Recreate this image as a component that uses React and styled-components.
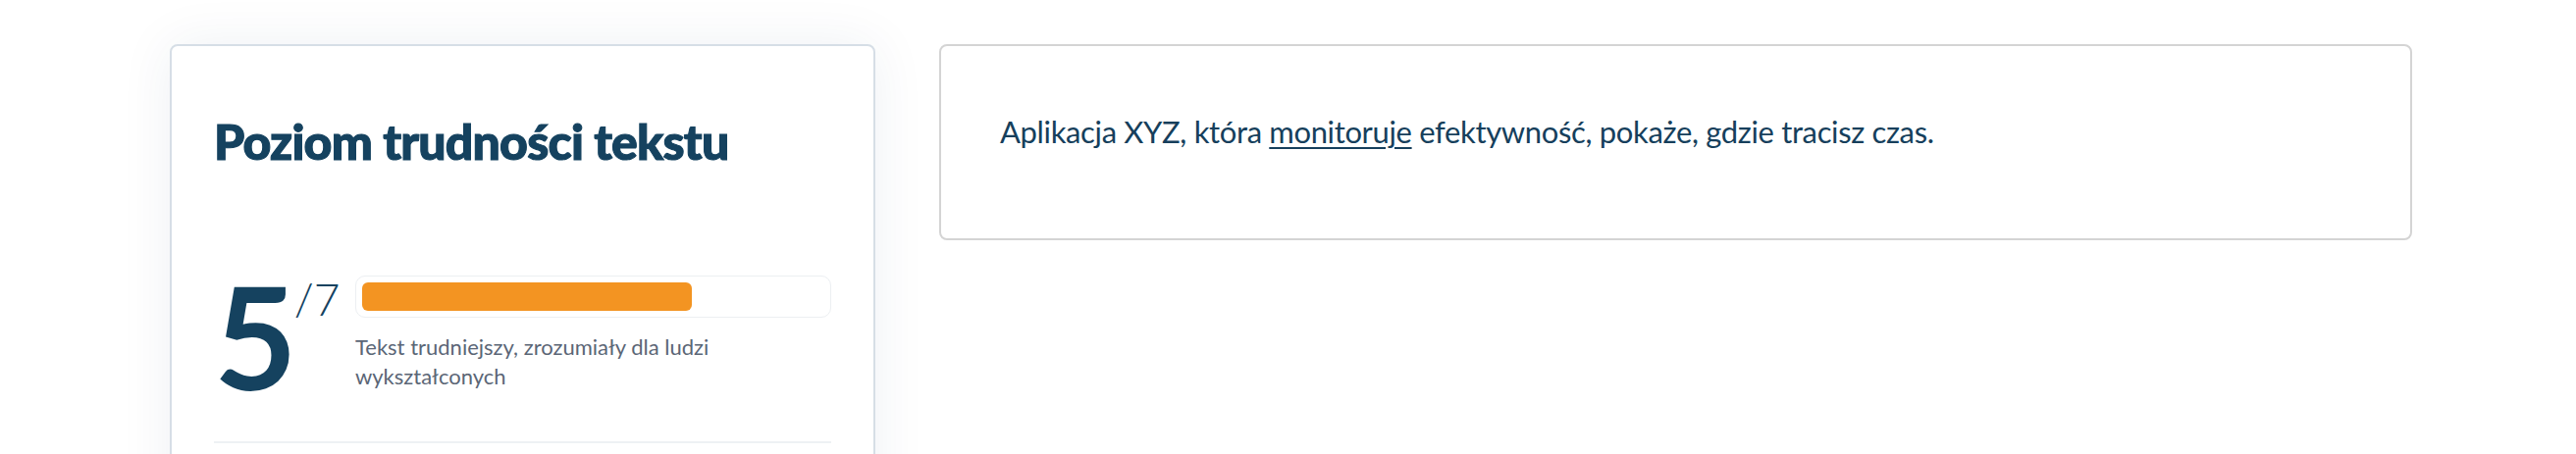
import React from 'react';
import styled, { createGlobalStyle } from 'styled-components';

const GlobalStyle = createGlobalStyle`
  body {
    margin: 0;
    background: #ffffff;
    overflow: hidden;
    font-family: 'Lato', 'Noto Sans', sans-serif;
  }
`;

const Layout = styled.main`
  display: flex;
  align-items: flex-start;
  gap: 65px;
  padding: 45px 167px 0 173px;
`;

const ScoreCard = styled.section`
  width: 719px;
  height: 640px;
  flex-shrink: 0;
  box-sizing: border-box;
  padding: 67px 43px 0;
  background: #ffffff;
  border: 2px solid #d6dee6;
  border-radius: 8px;
  box-shadow: 0 0 55px rgba(30, 60, 95, 0.07);
`;

const CardTitle = styled.h2`
  margin: 0;
  font-family: 'Lato', sans-serif;
  font-weight: 900;
  font-size: 50px;
  line-height: 60px;
  letter-spacing: -0.8px;
  color: #15425f;
  -webkit-text-stroke: 1.1px #15425f;
`;

const ScoreRow = styled.div`
  display: flex;
  margin-top: 95px;
`;

const Score = styled.div`
  display: flex;
  align-items: flex-start;
  width: 144px;
  flex-shrink: 0;
  color: #15425f;
`;

const Digit = styled.span`
  font-weight: 700;
  font-size: 146px;
  line-height: 1;
`;

const OutOf = styled.span`
  margin: 13px 0 0 -3px;
  font-weight: 300;
  font-size: 46px;
  line-height: 1;
`;

const BarColumn = styled.div`
  flex: 1;
  margin-top: 12px;
`;

const Track = styled.div`
  height: 43px;
  box-sizing: border-box;
  padding: 6px;
  border: 1px solid #eceff2;
  border-radius: 10px;
`;

const Fill = styled.div`
  height: 100%;
  background: #f39422;
  border-radius: 6px;
`;

const Description = styled.p`
  margin: 15px 0 0;
  max-width: 420px;
  font-size: 22px;
  line-height: 30px;
  letter-spacing: 0;
  color: #5b6676;
`;

const Divider = styled.hr`
  margin: 35px 0 0;
  border: none;
  border-top: 2px solid #eef1f4;
`;

const ExampleCard = styled.section`
  width: 1501px;
  height: 200px;
  flex-shrink: 0;
  box-sizing: border-box;
  padding: 69px 60px 0;
  border: 2px solid #d4d4d4;
  border-radius: 8px;
  background: #ffffff;
`;

const ExampleText = styled.p`
  margin: 0;
  font-size: 31px;
  line-height: 1.2;
  letter-spacing: -0.35px;
  color: #163f5c;
`;

const Marked = styled.span`
  text-decoration: underline;
  text-decoration-thickness: 2px;
  text-underline-offset: 4px;
`;

const level = 5;
const maxLevel = 7;

export default function App() {
  return (
    <>
      <GlobalStyle />
      <Layout>
        <ScoreCard>
          <CardTitle>Poziom trudności tekstu</CardTitle>
          <ScoreRow>
            <Score>
              <Digit>{level}</Digit>
              <OutOf>/{maxLevel}</OutOf>
            </Score>
            <BarColumn>
              <Track>
                <Fill style={{ width: `${(level / maxLevel) * 100}%` }} />
              </Track>
              <Description>
                Tekst trudniejszy, zrozumiały dla ludzi wykształconych
              </Description>
            </BarColumn>
          </ScoreRow>
          <Divider />
        </ScoreCard>
        <ExampleCard>
          <ExampleText>
            Aplikacja XYZ, która <Marked>monitoruje</Marked> efektywność, pokaże, gdzie tracisz czas.
          </ExampleText>
        </ExampleCard>
      </Layout>
    </>
  );
}
